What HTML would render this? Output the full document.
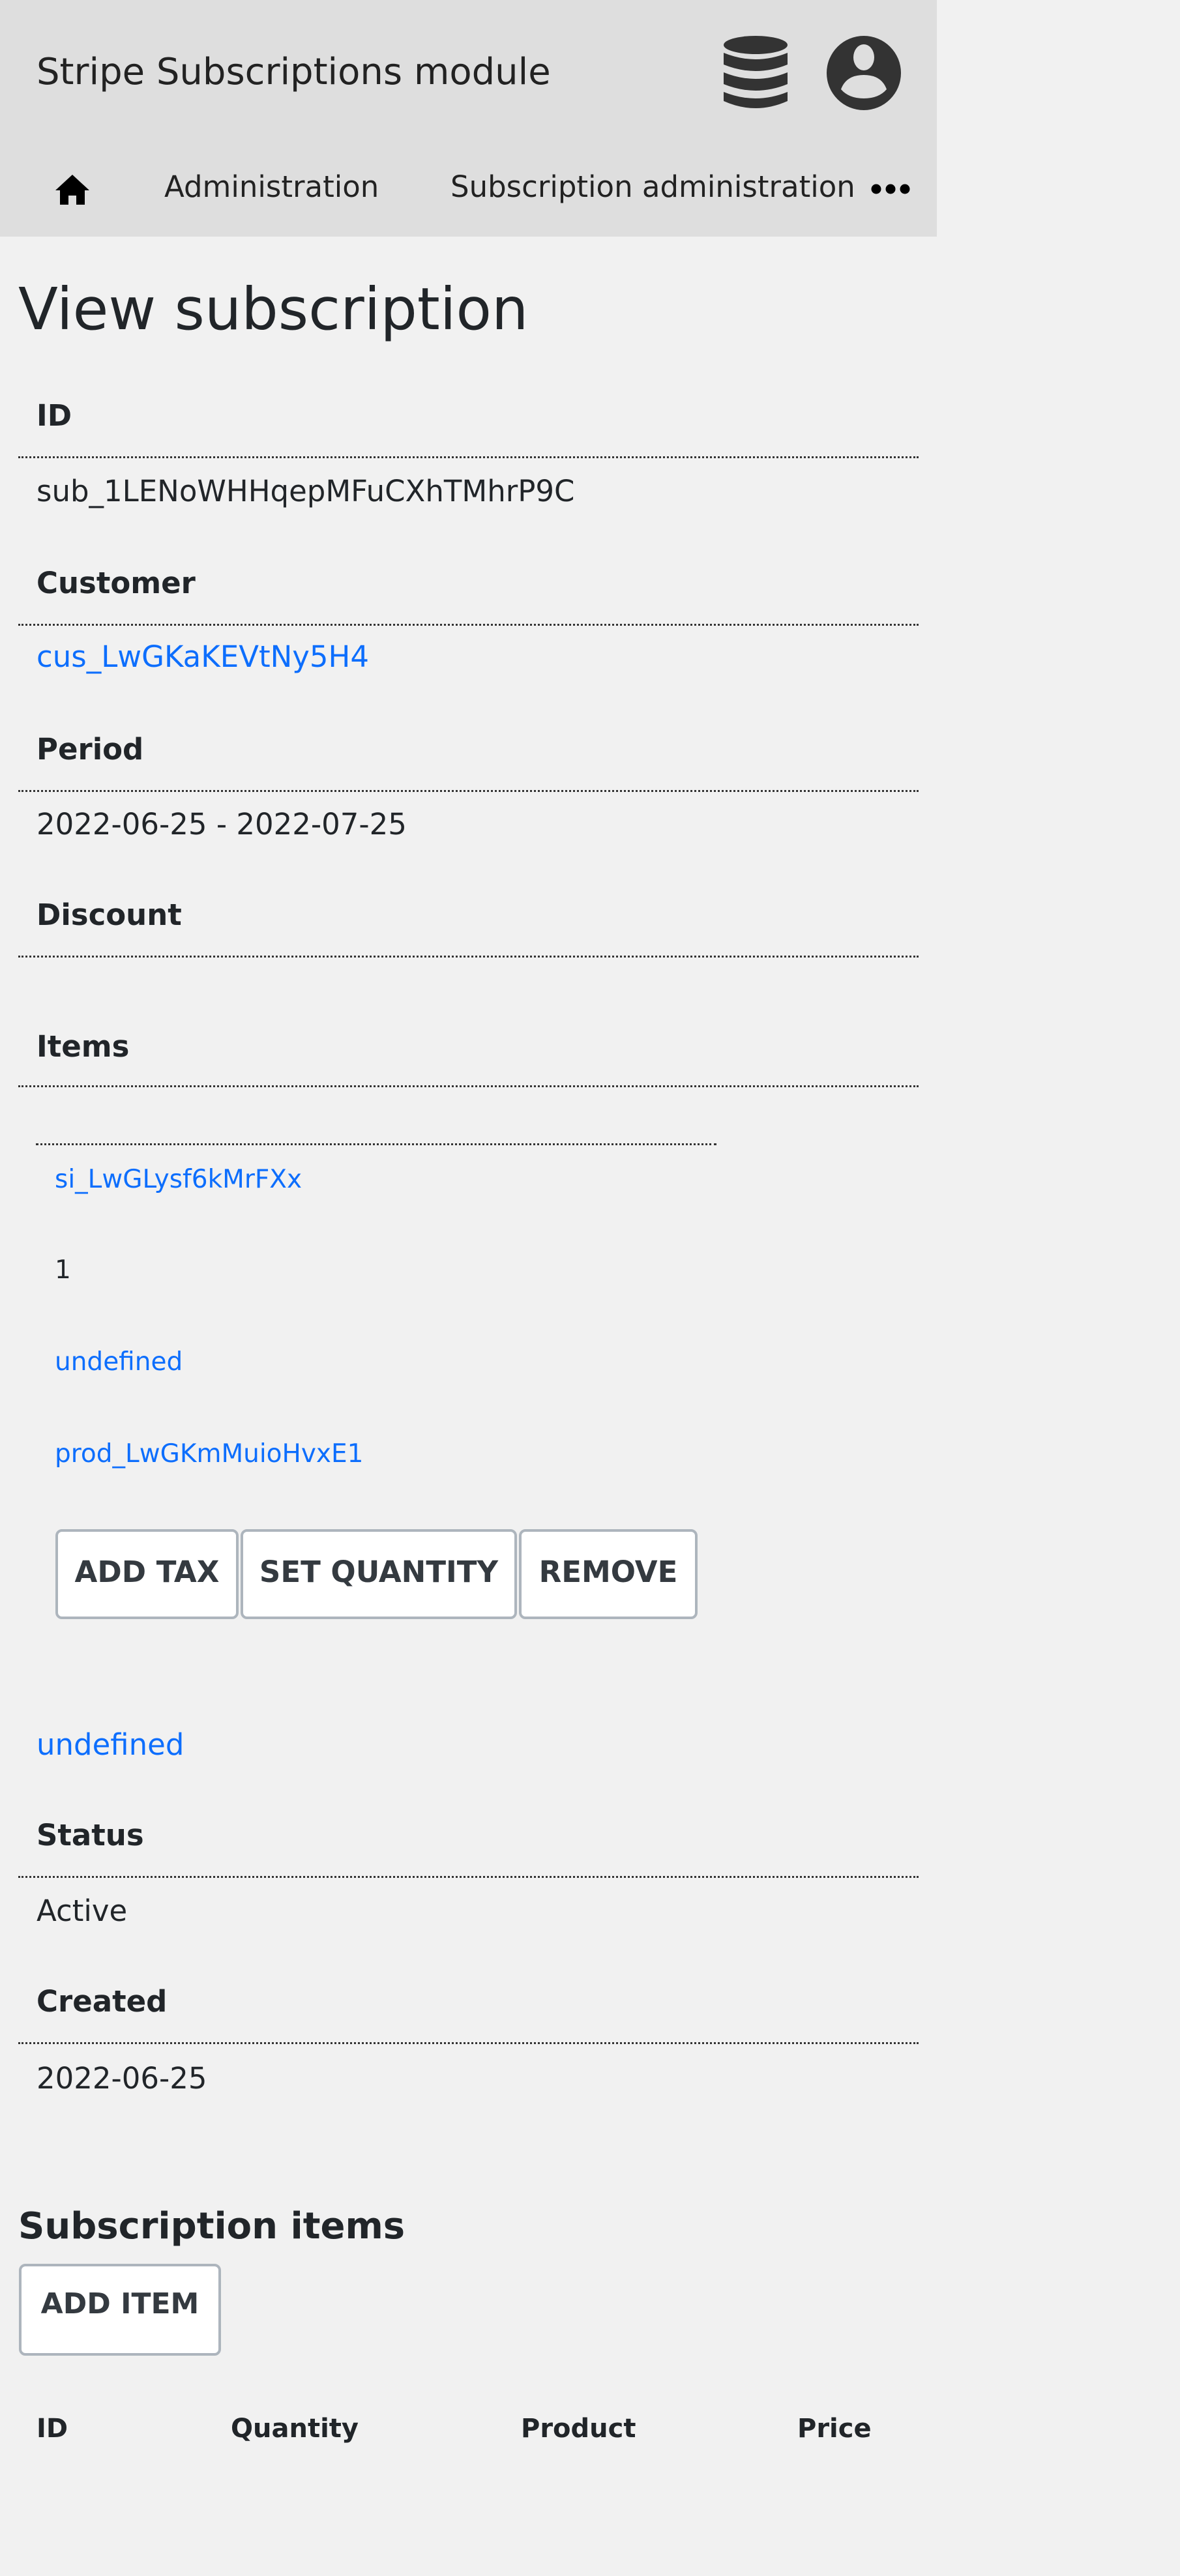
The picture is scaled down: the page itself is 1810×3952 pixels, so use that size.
<!DOCTYPE html>
<html><head><meta charset="utf-8">
<style>
*{margin:0;padding:0;box-sizing:border-box}
html,body{width:1810px;height:3952px;background:#f1f1f1;overflow:hidden}
body{position:relative;font-family:"DejaVu Sans","Liberation Sans",sans-serif;color:#212529}
.a{position:absolute;white-space:nowrap}
.hdr{position:absolute;left:0;top:0;width:1437px;height:363px;background:#dedede}
.lbl{font-weight:bold;font-size:45px;line-height:50px}
.val{font-size:45px;line-height:50px}
.ln{position:absolute;left:28px;width:1381px;border-top:3px dotted #333;height:0}
.lnk{color:#0d6efd}
.sm{font-size:39px;line-height:44px}
.btn{position:absolute;background:#fff;border:4px solid #adb5bd;border-radius:10px;color:#343a40;font-weight:bold;font-size:45px;display:flex;align-items:center;justify-content:center}
.th{font-weight:bold;font-size:40px;line-height:44px}
</style></head><body>
<div class="hdr"></div>
<div class="a" style="left:56px;top:80px;font-size:56px;line-height:62px;color:#222">Stripe Subscriptions module</div>
<svg class="a" style="left:1109px;top:55px" width="100" height="114" viewBox="0 0 100 114">
<ellipse cx="50" cy="14" rx="49" ry="14" fill="#333"/>
<path d="M1 26 Q50 46 99 26 V44 Q50 64 1 44Z" fill="#333"/>
<path d="M1 56 Q50 76 99 56 V74 Q50 94 1 74Z" fill="#333"/>
<path d="M1 86 Q50 106 99 86 V100 Q50 122 1 100Z" fill="#333"/>
</svg>
<svg class="a" style="left:1268px;top:55px" width="114" height="114" viewBox="0 0 114 114">
<circle cx="57" cy="57" r="57" fill="#333"/>
<ellipse cx="57" cy="33" rx="16" ry="20" fill="#dedede"/>
<path d="M22 82 Q30 60 57 60 Q84 60 92 82 Q80 96 57 96 Q34 96 22 82Z" fill="#dedede"/>
</svg>
<svg class="a" style="left:83px;top:266px" width="56" height="50" viewBox="0 0 56 50">
<path d="M28 2 L54 26 H47 V48 H34 V34 H22 V48 H9 V26 H2Z" fill="#000"/>
</svg>
<div class="a" style="left:252px;top:261px;font-size:45px;line-height:52px;color:#222">Administration</div>
<div class="a" style="left:691px;top:261px;font-size:45px;line-height:52px;color:#222">Subscription administration</div>
<svg class="a" style="left:1336px;top:282px" width="60" height="16"><circle cx="8" cy="8" r="7.5" fill="#000"/><circle cx="30" cy="8" r="7.5" fill="#000"/><circle cx="52" cy="8" r="7.5" fill="#000"/></svg>

<div class="a" style="left:28px;top:424px;font-size:89px;line-height:100px">View subscription</div>

<div class="a lbl" style="left:56px;top:613px">ID</div>
<div class="ln" style="top:700px"></div>
<div class="a val" style="left:56px;top:729px">sub_1LENoWHHqepMFuCXhTMhrP9C</div>

<div class="a lbl" style="left:56px;top:870px">Customer</div>
<div class="ln" style="top:957px"></div>
<div class="a val lnk" style="left:56px;top:983px">cus_LwGKaKEVtNy5H4</div>

<div class="a lbl" style="left:56px;top:1125px">Period</div>
<div class="ln" style="top:1212px"></div>
<div class="a val" style="left:56px;top:1240px">2022-06-25 - 2022-07-25</div>

<div class="a lbl" style="left:56px;top:1379px">Discount</div>
<div class="ln" style="top:1466px"></div>

<div class="a lbl" style="left:56px;top:1581px">Items</div>
<div class="ln" style="top:1665px"></div>

<div class="ln" style="top:1754px;left:55px;width:1044px"></div>
<div class="a sm lnk" style="left:84px;top:1788px">si_LwGLysf6kMrFXx</div>
<div class="a sm" style="left:84px;top:1927px">1</div>
<div class="a sm lnk" style="left:84px;top:2068px">undefined</div>
<div class="a sm lnk" style="left:84px;top:2209px">prod_LwGKmMuioHvxE1</div>

<div class="btn" style="left:85px;top:2346px;width:281px;height:138px;padding-bottom:8px">ADD TAX</div>
<div class="btn" style="left:369px;top:2346px;width:424px;height:138px;padding-bottom:8px">SET QUANTITY</div>
<div class="btn" style="left:796px;top:2346px;width:274px;height:138px;padding-bottom:8px">REMOVE</div>

<div class="a val lnk" style="left:56px;top:2652px">undefined</div>

<div class="a lbl" style="left:56px;top:2791px">Status</div>
<div class="ln" style="top:2878px"></div>
<div class="a val" style="left:56px;top:2907px">Active</div>

<div class="a lbl" style="left:56px;top:3046px">Created</div>
<div class="ln" style="top:3133px"></div>
<div class="a val" style="left:56px;top:3164px">2022-06-25</div>

<div class="a" style="left:28px;top:3382px;font-size:56px;line-height:68px;font-weight:bold">Subscription items</div>
<div class="btn" style="left:29px;top:3473px;width:310px;height:141px;padding-bottom:18px;font-size:44px">ADD ITEM</div>

<div class="a th" style="left:56px;top:3704px">ID</div>
<div class="a th" style="left:354px;top:3704px">Quantity</div>
<div class="a th" style="left:799px;top:3704px">Product</div>
<div class="a th" style="left:1223px;top:3704px">Price</div>
</body></html>
